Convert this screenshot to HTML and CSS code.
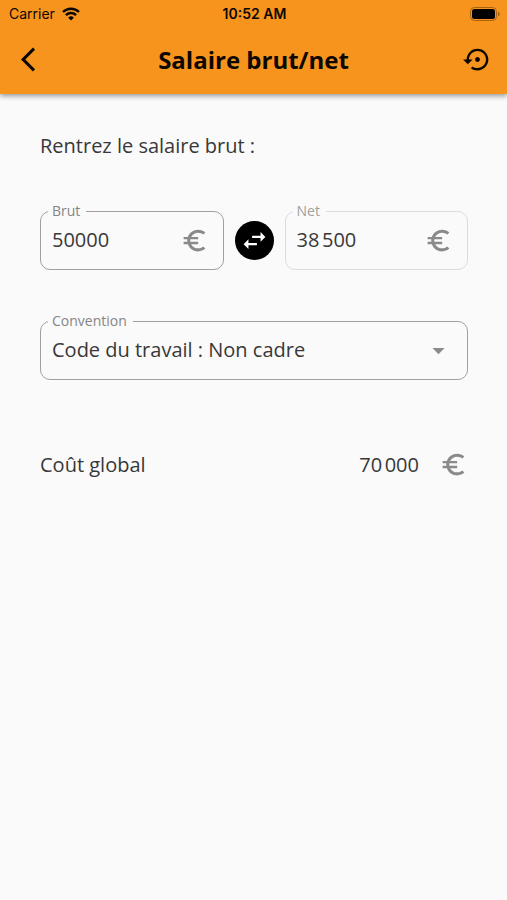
FILE: index.html
```html
<!DOCTYPE html>
<html lang="fr">
<head>
<meta charset="utf-8">
<meta name="viewport" content="width=device-width, initial-scale=1">
<title>Salaire brut/net</title>
<link rel="stylesheet" href="styles.css">
</head>
<body>
<svg class="sprite" aria-hidden="true">
  <symbol id="euro" viewBox="0 0 24 24"><path d="M15 18.5c-2.51 0-4.68-1.42-5.76-3.5H15v-2H8.58c-.05-.33-.08-.66-.08-1s.03-.67.08-1H15V9H9.24C10.32 6.92 12.5 5.5 15 5.5c1.61 0 3.09.59 4.23 1.57L21 5.3C19.41 3.87 17.3 3 15 3c-3.92 0-7.24 2.51-8.48 6H3v2h3.06c-.04.33-.06.66-.06 1s.02.67.06 1H3v2h3.52c1.24 3.49 4.56 6 8.48 6 2.31 0 4.41-.87 6-2.3l-1.78-1.77c-1.13.98-2.6 1.57-4.22 1.57z"/></symbol>
</svg>
<header class="header">
  <div class="status">
    <div class="carrier">
      <span>Carrier</span>
      <svg class="wifi" viewBox="0 0 18 14" aria-hidden="true">
        <path d="M9 13.6 6.2 10.7a4 4 0 0 1 5.6 0z"/>
        <path class="arc" d="M3.9 8.1a7.2 7.2 0 0 1 10.2 0M1 5a11.4 11.4 0 0 1 16 0"/>
      </svg>
    </div>
    <span class="time">10:52 AM</span>
    <svg class="battery" viewBox="0 0 30 14" aria-hidden="true">
      <rect class="shell" x="0.5" y="0.5" width="26" height="13" rx="4"/>
      <rect x="2" y="2" width="23" height="10" rx="2.5"/>
      <path class="tip" d="M28 4.5c2.2 1 2.2 4 0 5z"/>
    </svg>
  </div>
  <div class="bar">
    <button class="icon-button back" type="button" aria-label="Retour">
      <svg class="icon" viewBox="0 0 24 24"><path d="M11.67 3.87L9.9 2.1 0 12l9.9 9.9 1.77-1.77L3.54 12z"/></svg>
    </button>
    <h1 class="title">Salaire brut/net</h1>
    <button class="icon-button reset" type="button" aria-label="Réinitialiser">
      <svg class="icon" viewBox="0 0 24 24"><path d="M14 12c0-1.1-.9-2-2-2s-2 .9-2 2 .9 2 2 2 2-.9 2-2zm-2-9c-4.97 0-9 4.03-9 9H0l4 4 4-4H5c0-3.87 3.13-7 7-7s7 3.13 7 7-3.13 7-7 7c-1.51 0-2.91-.49-4.06-1.3l-1.42 1.44C8.04 20.3 9.94 21 12 21c4.97 0 9-4.03 9-9s-4.03-9-9-9z"/></svg>
    </button>
  </div>
</header>
<main class="content">
  <p class="intro">Rentrez le salaire brut :</p>
  <div class="amounts">
    <fieldset class="field">
      <legend><label for="brut">Brut</label></legend>
      <div class="field-row">
        <input id="brut" type="text" inputmode="numeric" value="50000">
        <svg class="icon muted" aria-hidden="true"><use href="#euro"/></svg>
      </div>
    </fieldset>
    <button class="swap" type="button" aria-label="Inverser brut et net">
      <svg class="icon" viewBox="0 0 24 24"><path d="M6.99 11L3 15l3.99 4v-3H14v-2H6.99v-3zM21 9l-3.99-4v3H10v2h7.01v3L21 9z"/></svg>
    </button>
    <fieldset class="field readonly">
      <legend><label for="net">Net</label></legend>
      <div class="field-row">
        <input id="net" type="text" value="38&#8239;500" readonly>
        <svg class="icon muted" aria-hidden="true"><use href="#euro"/></svg>
      </div>
    </fieldset>
  </div>
  <fieldset class="field">
    <legend><label for="convention">Convention</label></legend>
    <div class="field-row">
      <select id="convention">
        <option>Code du travail : Non cadre</option>
      </select>
      <svg class="icon muted" viewBox="0 0 24 24" aria-hidden="true"><path d="M7 10l5 5 5-5z"/></svg>
    </div>
  </fieldset>
  <div class="total">
    <span>Coût global</span>
    <output class="total-value">70&#8239;000</output>
    <svg class="icon muted" aria-hidden="true"><use href="#euro"/></svg>
  </div>
</main>
</body>
</html>
```

FILE: styles.css
```css
* {
  box-sizing: border-box;
}

body {
  margin: 0;
  min-height: 100vh;
  background: #fafafa;
  color: #383838;
  font: 20px/28px "Open Sans", "Noto Sans", sans-serif;
}

button {
  border: 0;
  padding: 0;
  background: none;
  color: inherit;
}

.sprite {
  display: none;
}

.icon {
  display: block;
  flex: none;
  width: 29px;
  height: 29px;
  fill: currentColor;
}

.muted {
  color: #8a8a8a;
}

/* Header */
.header {
  background: #f7941e;
  color: #0c0700;
  box-shadow: 0 2px 5px rgba(0, 0, 0, 0.4);
}

.status {
  display: grid;
  grid-template-columns: 1fr auto 1fr;
  align-items: center;
  height: 26px;
  padding: 2px 7px 0 9px;
  font: 14px/20px Inter, sans-serif;
}

.carrier {
  display: flex;
  align-items: center;
  gap: 7px;
}

.wifi {
  width: 18px;
  height: 14px;
}

.arc {
  fill: none;
  stroke: currentColor;
  stroke-width: 2.4;
}

.time {
  font-weight: 600;
}

.battery {
  justify-self: end;
  width: 30px;
  height: 14px;
}

.shell {
  fill: none;
  stroke: #a8620f;
}

.tip {
  fill: #a8620f;
}

.bar {
  display: grid;
  grid-template-columns: 1fr auto 1fr;
  align-items: center;
  height: 68px;
  padding: 0 15px 1px;
}

.back {
  justify-self: start;
  padding-left: 6px;
}

.reset {
  justify-self: end;
}

.title {
  margin: 0;
  font-size: 24px;
  line-height: 32px;
  font-weight: 700;
}

/* Form */
.content {
  padding: 38px 39px 40px 40px;
}

.intro {
  margin: 0 0 42px;
}

.amounts {
  display: grid;
  grid-template-columns: 1fr 39px 1fr;
  gap: 11px;
  margin-bottom: 42px;
}

.field {
  min-width: 0;
  height: 68px;
  margin: 0;
  padding: 0 14px 0 11px;
  border: 1px solid #a0a0a0;
  border-radius: 10px;
}

.readonly {
  border-color: #dcdcdc;
}

.field legend {
  height: 18px;
  margin-left: -4px;
  padding: 0 6px 0 4px;
  color: #858585;
  font-size: 14px;
  line-height: 18px;
}

.field label {
  display: block;
}

.readonly legend {
  color: #a0a0a0;
}

.field-row {
  display: flex;
  align-items: center;
  height: 40px;
}

.field input,
.field select {
  flex: 1;
  min-width: 0;
  height: 28px;
  padding: 0;
  border: 0;
  outline: 0;
  appearance: none;
  background: none;
  color: inherit;
  font: inherit;
}

.swap {
  display: grid;
  place-items: center;
  width: 39px;
  height: 39px;
  margin-top: 19px;
  border-radius: 50%;
  background: #000;
  color: #fff;
}

.total {
  display: flex;
  align-items: center;
  margin-top: 70px;
}

.total-value {
  margin-left: auto;
  margin-right: 20px;
}
```
